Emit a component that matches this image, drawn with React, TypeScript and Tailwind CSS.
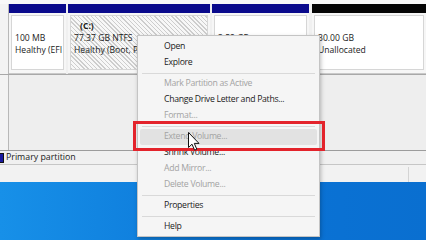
import React from 'react';

type Item = { label: string; disabled?: boolean; active?: boolean } | 'sep';

const menu: Item[] = [
  { label: 'Open' },
  { label: 'Explore' },
  'sep',
  { label: 'Mark Partition as Active', disabled: true },
  { label: 'Change Drive Letter and Paths...' },
  { label: 'Format...', disabled: true },
  'sep',
  { label: 'Extend Volume...', disabled: true, active: true },
  { label: 'Shrink Volume...' },
  { label: 'Add Mirror...', disabled: true },
  { label: 'Delete Volume...', disabled: true },
  'sep',
  { label: 'Properties' },
  'sep',
  { label: 'Help' },
];

function Partition({
  width,
  header,
  lines,
  hatched,
  grow,
}: {
  width?: string;
  header: string;
  lines: string[];
  hatched?: boolean;
  grow?: boolean;
}) {
  return (
    <div className={`flex flex-col ${grow ? 'flex-1' : ''} ${width ?? ''}`}>
      <div className={`h-[9px] ${header}`} />
      <div className="flex-1 p-[2px] pb-[3px] bg-[#f6f6f6] border-b border-[#c9c9c9]">
        <div
          className={`h-full border border-[#d6d6d6] px-[3px] pt-[4px] leading-[12px] text-[8.6px] text-[#1b1b1b] overflow-hidden whitespace-nowrap ${
            hatched
              ? 'bg-[repeating-linear-gradient(45deg,#cdcdcd_0px,#cdcdcd_1px,#f7f7f7_1px,#f7f7f7_3px)] border-[#9a9a9a]'
              : 'bg-white'
          }`}
        >
          {lines.map((l, i) => (
            <div key={i} className={`h-[12px] ${i === 0 && l ? 'font-bold pl-[6px]' : ''}`}>
              {l}
            </div>
          ))}
        </div>
      </div>
    </div>
  );
}

export default function App() {
  return (
    <div className="relative w-[426px] h-[240px] overflow-hidden bg-[#f0f0f0] font-['Open_Sans','Noto_Sans',sans-serif]">
      <div className="flex flex-col h-full">
        {/* top strip */}
        <div className="h-[4px] bg-[#f9f9f9]" />

        {/* disk row */}
        <div className="flex h-[71px] border-b border-[#a8a8a8]">
          <div className="w-[9px] border-r border-[#b8b8b8] bg-[#f3f3f3]" />
          <Partition width="w-[57px]" header="bg-[#0a0a8c]" lines={['', '100 MB', 'Healthy (EFI']} />
          <div className="w-[2px]" />
          <Partition
            width="w-[142px]"
            header="bg-[#0a0a8c]"
            lines={['(C:)', '77.37 GB NTFS', 'Healthy (Boot, Pa']}
            hatched
          />
          <div className="w-[2px]" />
          <Partition width="w-[97px]" header="bg-[#0a0a8c]" lines={['', '3.52 GB', '']} />
          <div className="w-[3px]" />
          <Partition grow header="bg-[#050505]" lines={['', '30.00 GB', 'Unallocated']} />
        </div>

        {/* second disk row (empty) */}
        <div className="flex h-[76px] border-b border-[#9c9c9c]">
          <div className="w-[9px] border-r border-[#b8b8b8] bg-[#f3f3f3]" />
          <div className="flex-1 bg-[#eeeeee]" />
        </div>

        {/* legend */}
        <div className="flex items-center h-[14px] border-b border-[#c6c6c6] bg-[#f0f0f0]">
          <div className="w-[4px] h-[10px] bg-[#1a1aa0] border border-[#111] border-l-0" />
          <span className="ml-[2px] text-[8.8px] text-[#1b1b1b] leading-none">Primary partition</span>
        </div>

        {/* status bar */}
        <div className="flex h-[17px] bg-[#f2f2f2] pt-[2px]">
          <div className="flex-1 border-r border-[#d4d4d4]" />
          <div className="w-[17px]" />
        </div>

        {/* desktop */}
        <div className="flex-1 bg-[linear-gradient(90deg,#1790e8,#0a73d6_60%,#0a6fd0)]" />
      </div>

      {/* context menu */}
      <div className="absolute left-[137px] top-[35px] w-[183px] pt-[3px] pb-[1px] px-[2px] bg-[#f5f5f5] border border-[#c4c4c4] shadow-[1px_2px_4px_rgba(0,0,0,0.25)]">
        {menu.map((it, i) =>
          it === 'sep' ? (
            <div key={i} className="h-[5px] flex items-center px-[2px]">
              <div className="h-px w-full bg-[#d9d9d9]" />
            </div>
          ) : (
            <div
              key={i}
              className={`h-[16px] flex items-center pl-[24px] text-[8.7px] tracking-[-0.3px] whitespace-nowrap ${
                it.disabled ? 'text-[#a3a3a3]' : 'text-[#1b1b1b]'
              } ${it.active ? 'bg-[#e2e2e2] rounded-[2px]' : ''}`}
            >
              {it.label}
            </div>
          )
        )}
      </div>

      {/* red highlight box */}
      <div className="absolute left-[133px] top-[121px] w-[192px] h-[30px] border-[3px] border-[#e3232b]" />

      {/* cursor */}
      <svg className="absolute left-[188px] top-[132px]" width="13" height="20" viewBox="0 0 13 20">
        <path
          d="M0.5 0.5 L0.5 15.5 L4 12.2 L6.6 18.2 L8.8 17.2 L6.3 11.4 L11 11.4 Z"
          fill="#fff"
          stroke="#111"
          strokeWidth="1"
          strokeLinejoin="round"
        />
      </svg>
    </div>
  );
}
